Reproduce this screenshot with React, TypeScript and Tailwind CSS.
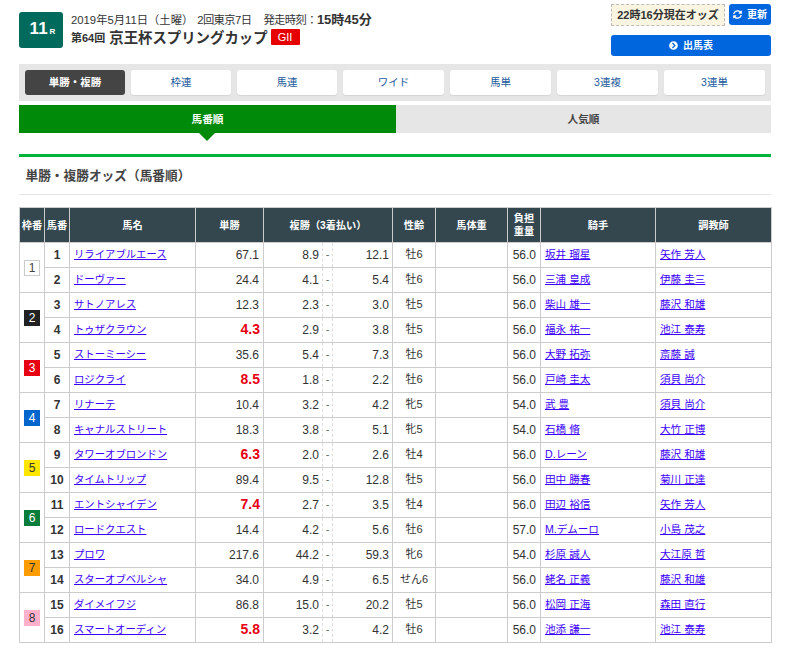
import { FaSyncAlt, FaChevronCircleRight } from "react-icons/fa";

const font = "[font-family:'Liberation_Sans','Noto_Sans_CJK_JP',sans-serif]";

const tabs = ["枠連", "馬連", "ワイド", "馬単", "3連複", "3連単"];

const rows = [
  ["1", "リライアブルエース", "67.1", "8.9", "12.1", "牡6", "56.0", "坂井 瑠星", "矢作 芳人"],
  ["2", "ドーヴァー", "24.4", "4.1", "5.4", "牡6", "56.0", "三浦 皇成", "伊藤 圭三"],
  ["3", "サトノアレス", "12.3", "2.3", "3.0", "牡5", "56.0", "柴山 雄一", "藤沢 和雄"],
  ["4", "トゥザクラウン", "4.3", "2.9", "3.8", "牡5", "56.0", "福永 祐一", "池江 泰寿"],
  ["5", "ストーミーシー", "35.6", "5.4", "7.3", "牡6", "56.0", "大野 拓弥", "斎藤 誠"],
  ["6", "ロジクライ", "8.5", "1.8", "2.2", "牡6", "56.0", "戸崎 圭太", "須貝 尚介"],
  ["7", "リナーテ", "10.4", "3.2", "4.2", "牝5", "54.0", "武 豊", "須貝 尚介"],
  ["8", "キャナルストリート", "18.3", "3.8", "5.1", "牝5", "54.0", "石橋 脩", "大竹 正博"],
  ["9", "タワーオブロンドン", "6.3", "2.0", "2.6", "牡4", "56.0", "D.レーン", "藤沢 和雄"],
  ["10", "タイムトリップ", "89.4", "9.5", "12.8", "牡5", "56.0", "田中 勝春", "菊川 正達"],
  ["11", "エントシャイデン", "7.4", "2.7", "3.5", "牡4", "56.0", "田辺 裕信", "矢作 芳人"],
  ["12", "ロードクエスト", "14.4", "4.2", "5.6", "牡6", "57.0", "M.デムーロ", "小島 茂之"],
  ["13", "プロワ", "217.6", "44.2", "59.3", "牝6", "54.0", "杉原 誠人", "大江原 哲"],
  ["14", "スターオブベルシャ", "34.0", "4.9", "6.5", "せん6", "56.0", "蛯名 正義", "藤沢 和雄"],
  ["15", "ダイメイフジ", "86.8", "15.0", "20.2", "牡5", "56.0", "松岡 正海", "森田 直行"],
  ["16", "スマートオーディン", "5.8", "3.2", "4.2", "牡6", "56.0", "池添 謙一", "池江 泰寿"],
];

const hot = new Set(["4", "6", "9", "11", "16"]);

const waku = [
  "bg-white text-[#444] border border-[#ccc]",
  "bg-[#222222] text-white",
  "bg-[#e60012] text-white",
  "bg-[#0066cc] text-white",
  "bg-[#ffe600] text-[#333]",
  "bg-[#0a7d3c] text-white",
  "bg-[#ff9d00] text-[#333]",
  "bg-[#ffb0cb] text-[#333]",
];

const td = "border border-[#cccccc] p-0 pb-[1px] h-[25px]";
const th = "border border-[#cccccc] p-0 font-bold text-white text-[10.2px] text-center align-middle leading-[13px]";
const link = "text-[#3c00ff] underline";

export default function App() {
  return (
    <div className={`${font} w-[790px] h-[658px] bg-white text-[#333] px-[19px] overflow-hidden`}>
      <div className="flex justify-between h-[64px]">
        <div className="flex pt-[12px]">
          <div className="w-[44px] h-[36px] rounded-[3px] bg-[#006b5c] text-white font-bold flex items-baseline justify-center pl-[3px] pt-[6px] leading-[22px]">
            <span className="text-[17px]">11</span>
            <span className="text-[8px] ml-[2px]">R</span>
          </div>
          <div className="ml-[8px] text-[#333]">
            <div className="flex items-baseline text-[11.3px] leading-[16px] h-[17px] whitespace-pre">
              <span>2019年5月11日（土曜）</span>
              <span className="ml-[4px] tracking-[-0.6px]">2回東京7日</span>
              <span className="ml-[12px] tracking-[-0.6px]">発走時刻：</span>
              <span className="font-bold text-[13px]">15時45分</span>
            </div>
            <div className="flex items-center h-[18px] pt-[1px]">
              <span className="text-[11px] font-bold">第64回</span>
              <span className="text-[14.4px] font-bold ml-[4px]">京王杯スプリングカップ</span>
              <span className="ml-[3px] -mt-[3px] w-[29px] h-[16px] bg-[#e60000] text-white text-[11px] rounded-[1px] flex items-center justify-center">GII</span>
            </div>
          </div>
        </div>
        <div className="w-[160px] pt-[4px]">
          <div className="flex justify-between">
            <div className="w-[114px] h-[22px] border border-dashed border-[#bbb] bg-[#faf5e0] text-[11px] font-bold text-[#333] flex items-center justify-center">22時16分現在オッズ</div>
            <div className="w-[42px] h-[21px] rounded-[3px] bg-[#0066dd] text-white text-[10px] font-bold flex items-center justify-center gap-[5px]">
              <FaSyncAlt className="w-[9px] h-[9px]" />
              更新
            </div>
          </div>
          <div className="mt-[9px] h-[21px] rounded-[3px] bg-[#0066dd] text-white text-[10px] font-bold flex items-center justify-center gap-[5px]">
            <FaChevronCircleRight className="w-[9px] h-[9px]" />
            出馬表
          </div>
        </div>
      </div>

      <div className="h-[37px] bg-[#e6e6e6] p-[6px] flex gap-[6px]">
        <div className="w-[100px] rounded-[3px] bg-[#444444] text-white text-[10.5px] font-bold flex items-center justify-center">単勝・複勝</div>
        {tabs.map((t, i) => (
          <div key={t} className={`${i < 2 ? "w-[100px]" : "w-[101px]"} rounded-[3px] bg-white text-[#1c5a9c] text-[10.5px] flex items-center justify-center shadow-[0_1px_1px_rgba(0,0,0,0.08)]`}>{t}</div>
        ))}
      </div>

      <div className="flex mt-[4px] h-[28px] text-[10.7px] font-bold">
        <div className="w-[377px] bg-[#008a0a] text-white flex items-center justify-center">馬番順</div>
        <div className="flex-1 bg-[#e6e6e6] text-[#444] flex items-center justify-center">人気順</div>
      </div>
      <div className="w-[376px] h-[8px] flex justify-center">
        <div className="w-0 h-0 border-x-[8px] border-x-transparent border-t-[8px] border-t-[#008a0a]" />
      </div>

      <div className="mt-[13px] h-[3px] bg-[#00b33c]" />
      <div className="h-[38px] pl-[6.5px] pt-[2px] flex items-center text-[12.7px] font-bold text-[#444] border-b border-[#e5e5e5]">単勝・複勝オッズ（馬番順）</div>

      <table className="mt-[12px] w-[752px] table-fixed border-collapse text-[12px]">
        <colgroup>
          <col className="w-[25px]" />
          <col className="w-[25px]" />
          <col className="w-[126px]" />
          <col className="w-[68px]" />
          <col className="w-[59px]" />
          <col className="w-[10px]" />
          <col className="w-[60px]" />
          <col className="w-[43px]" />
          <col className="w-[72px]" />
          <col className="w-[33px]" />
          <col className="w-[115px]" />
          <col className="w-[116px]" />
        </colgroup>
        <thead>
          <tr className="h-[35px] bg-[#34474f]">
            <th className={th}>枠番</th>
            <th className={th}>馬番</th>
            <th className={th}>馬名</th>
            <th className={th}>単勝</th>
            <th className={th} colSpan={3}>複勝（3着払い）</th>
            <th className={th}>性齢</th>
            <th className={th}>馬体重</th>
            <th className={th}>負担<br />重量</th>
            <th className={th}>騎手</th>
            <th className={th}>調教師</th>
          </tr>
        </thead>
        <tbody>
          {rows.map((r, i) => {
            const isHot = hot.has(r[0]);
            return (
              <tr key={r[0]}>
                {i % 2 === 0 && (
                  <td rowSpan={2} className="border border-[#cccccc] p-0">
                    <div className={`w-[16px] h-[16px] mx-auto flex items-center justify-center text-[12px] ${waku[i / 2]}`}>{i / 2 + 1}</div>
                  </td>
                )}
                <td className={`${td} text-center font-bold text-[12px]`}>{r[0]}</td>
                <td className={`${td} pl-[4px] whitespace-nowrap text-[10.35px]`}><a className={link}>{r[1]}</a></td>
                <td className={`${td} text-right ${isHot ? "text-[#e60012] font-bold text-[14px] pr-[3px]" : "pr-[4px]"}`}>{r[2]}</td>
                <td className={`${td} text-right pr-[3px] !border-r-0`}>{r[3]}</td>
                <td className="border-y border-y-[#cccccc] border-x border-x-[#dddddd] border-dashed [border-top-style:solid] [border-bottom-style:solid] p-0 pb-[1px] text-center text-[11px] text-[#666]">-</td>
                <td className={`${td} text-right pr-[3px] !border-l-0`}>{r[4]}</td>
                <td className={`${td} text-center text-[11px] whitespace-nowrap`}>{r[5]}</td>
                <td className={td}></td>
                <td className={`${td} text-right pr-[4px]`}>{r[6]}</td>
                <td className={`${td} pl-[4px] whitespace-nowrap text-[10.6px]`}><a className={link}>{r[7]}</a></td>
                <td className={`${td} pl-[4px] whitespace-nowrap text-[10.6px]`}><a className={link}>{r[8]}</a></td>
              </tr>
            );
          })}
        </tbody>
      </table>
    </div>
  );
}
